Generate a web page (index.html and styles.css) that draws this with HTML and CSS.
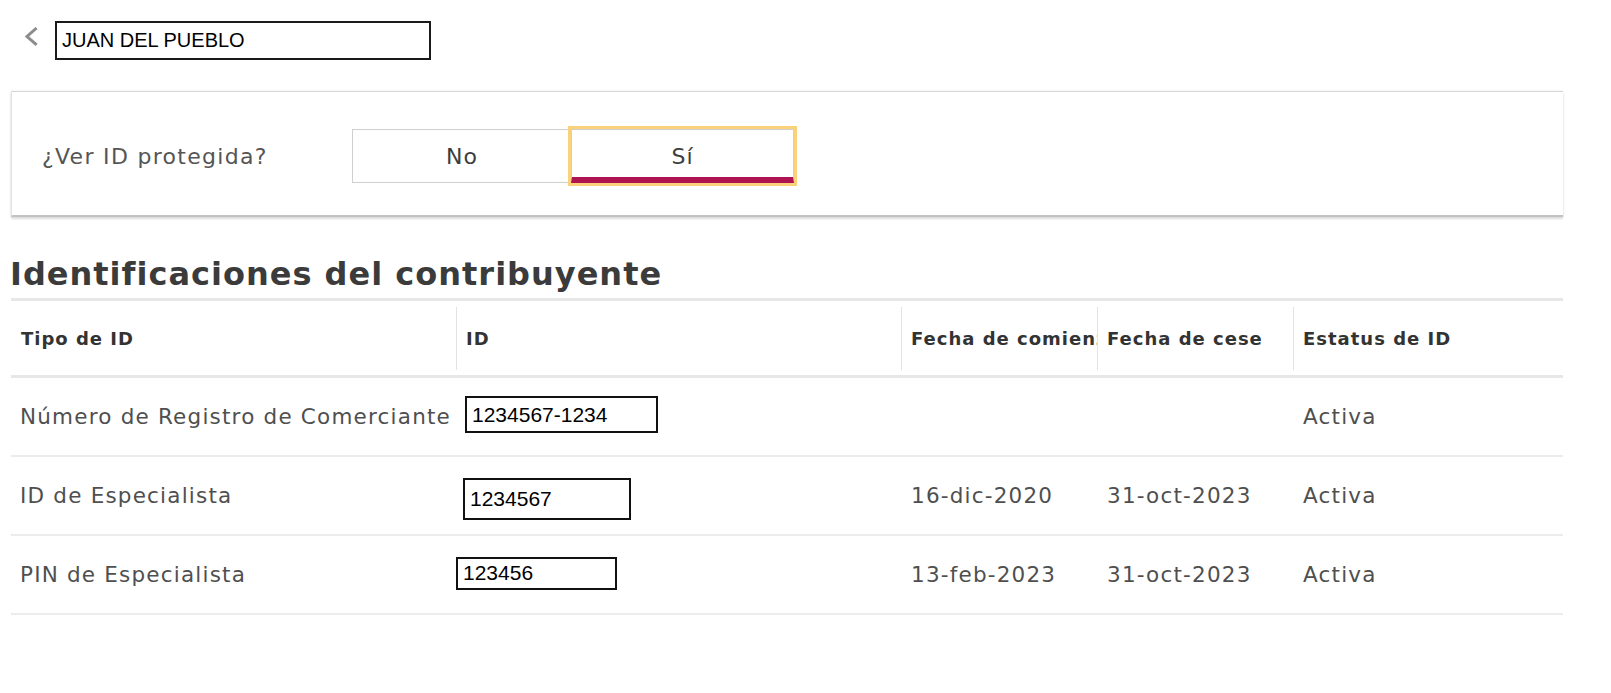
FILE: index.html
```html
<!DOCTYPE html>
<html lang="es">
<head>
    <meta charset="UTF-8">
    <meta name="viewport" content="width=device-width, initial-scale=1.0">
    <title>Identificaciones del contribuyente</title>
    <link rel="stylesheet" href="styles.css">
</head>
<body>
    <div class="topbar">
        <a class="back" href="#" aria-label="Volver">
            <svg width="14" height="20" viewBox="0 0 14 20">
                <polyline points="11.5,2 3,9.5 11.5,17" fill="none" stroke="#8c8c8c" stroke-width="3" stroke-linecap="square"/>
            </svg>
        </a>
        <div class="name-box">JUAN DEL PUEBLO</div>
    </div>

    <div class="card">
        <div class="card-label">¿Ver ID protegida?</div>
        <div class="toggle">
            <button class="toggle-btn">No</button>
            <button class="toggle-btn selected">Sí</button>
        </div>
    </div>

    <h1 class="title">Identificaciones del contribuyente</h1>

    <table class="ids">
        <colgroup>
            <col class="c-tipo">
            <col class="c-id">
            <col class="c-fecha">
            <col class="c-fecha">
            <col class="c-estatus">
        </colgroup>
        <thead>
            <tr>
                <th><div class="th-in first">Tipo de ID</div></th>
                <th><div class="th-in">ID</div></th>
                <th><div class="th-in">Fecha de comienzo</div></th>
                <th><div class="th-in">Fecha de cese</div></th>
                <th><div class="th-in">Estatus de ID</div></th>
            </tr>
        </thead>
        <tbody>
            <tr>
                <td class="tipo">Número de Registro de Comerciante</td>
                <td class="id"><div class="id-wrap"><span class="id-box box-a">1234567-1234</span></div></td>
                <td></td>
                <td></td>
                <td>Activa</td>
            </tr>
            <tr>
                <td class="tipo">ID de Especialista</td>
                <td class="id"><div class="id-wrap"><span class="id-box box-b">1234567</span></div></td>
                <td>16-dic-2020</td>
                <td class="cese">31-oct-2023</td>
                <td>Activa</td>
            </tr>
            <tr>
                <td class="tipo">PIN de Especialista</td>
                <td class="id"><div class="id-wrap"><span class="id-box box-c">123456</span></div></td>
                <td>13-feb-2023</td>
                <td class="cese">31-oct-2023</td>
                <td>Activa</td>
            </tr>
        </tbody>
    </table>
</body>
</html>
```

FILE: styles.css
```css
body {
    margin: 0;
    font-family: "DejaVu Sans", sans-serif;
    color: #4d4d4d;
    background: #fff;
}

.topbar {
    display: flex;
    align-items: flex-start;
    padding: 21px 0 0 24px;
}
.back {
    display: block;
    width: 14px;
    height: 20px;
    margin-top: 6px;
    margin-right: 17px;
}
.back svg {
    display: block;
}
.name-box {
    box-sizing: border-box;
    width: 376px;
    height: 39px;
    border: 2px solid #1a1a1a;
    padding-left: 5px;
    font-family: "Liberation Sans", Arial, sans-serif;
    font-size: 20px;
    line-height: 34px;
    color: #000;
}

.card {
    box-sizing: border-box;
    display: flex;
    align-items: center;
    margin: 31px 48px 0 11px;
    height: 126px;
    padding: 5px 0 0 30px;
    border-top: 1px solid #d6d6d6;
    border-left: 1px solid #e2e2e2;
    border-bottom: 2px solid #c2c2c2;
    box-shadow: 0 0 3px rgba(0, 0, 0, 0.08), 0 2px 2px rgba(0, 0, 0, 0.12);
}
.card-label {
    flex: 0 0 310px;
    font-size: 22px;
    letter-spacing: 1.3px;
    color: #555;
}
.toggle {
    display: flex;
}
.toggle-btn {
    box-sizing: border-box;
    height: 54px;
    background: #fff;
    border: 1px solid #cfcfcf;
    font-family: "DejaVu Sans", sans-serif;
    font-size: 22px;
    letter-spacing: 1px;
    color: #3d3d3d;
    padding: 0;
    cursor: pointer;
}
.toggle-btn:first-child {
    width: 219px;
    border-right: none;
}
.toggle-btn.selected {
    width: 223px;
    padding-top: 5px;
    border-bottom: 6px solid #ad1450;
    outline: 3px solid #fad27c;
}

.title {
    margin: 38px 0 5px 10px;
    font-size: 32px;
    line-height: 38px;
    font-weight: 700;
    letter-spacing: 1px;
    color: #3b3b3b;
}

.ids {
    margin-left: 11px;
    width: 1552px;
    table-layout: fixed;
    border-collapse: separate;
    border-spacing: 0;
    border-top: 3px solid #e7e7e7;
}
.c-tipo { width: 445px; }
.c-id { width: 445px; }
.c-fecha { width: 196px; }
.c-estatus { width: 270px; }

.ids th {
    height: 74px;
    padding: 0;
    text-align: left;
    border-bottom: 3px solid #e7e7e7;
    overflow: hidden;
}
.th-in {
    box-sizing: border-box;
    display: flex;
    align-items: center;
    height: 63px;
    padding-left: 9px;
    border-left: 1px solid #e3e3e3;
    font-size: 18px;
    font-weight: 700;
    letter-spacing: 1px;
    color: #333;
    white-space: nowrap;
}
.th-in.first {
    border-left: none;
    padding-left: 10px;
}

.ids td {
    height: 77px;
    padding: 0 0 0 10px;
    border-bottom: 2px solid #ececec;
    font-size: 21.5px;
    letter-spacing: 1.2px;
    color: #4f4f4f;
    white-space: nowrap;
    overflow: hidden;
}
.ids td.tipo {
    padding-left: 9px;
}
.ids td.id {
    padding-left: 0;
    overflow: visible;
}
.id-wrap {
    display: flex;
    align-items: center;
    height: 77px;
}
.id-box {
    box-sizing: border-box;
    display: flex;
    align-items: center;
    border: 2px solid #111;
    padding-left: 5px;
    background: #fff;
    font-family: "Liberation Sans", Arial, sans-serif;
    font-size: 21px;
    letter-spacing: 0;
    color: #000;
}
.box-a {
    width: 193px;
    height: 37px;
    margin: 0 0 4px 9px;
}
.box-b {
    width: 168px;
    height: 42px;
    margin: 6px 0 0 7px;
}
.box-c {
    width: 161px;
    height: 33px;
    margin: 0 0 3px 0;
}
```
